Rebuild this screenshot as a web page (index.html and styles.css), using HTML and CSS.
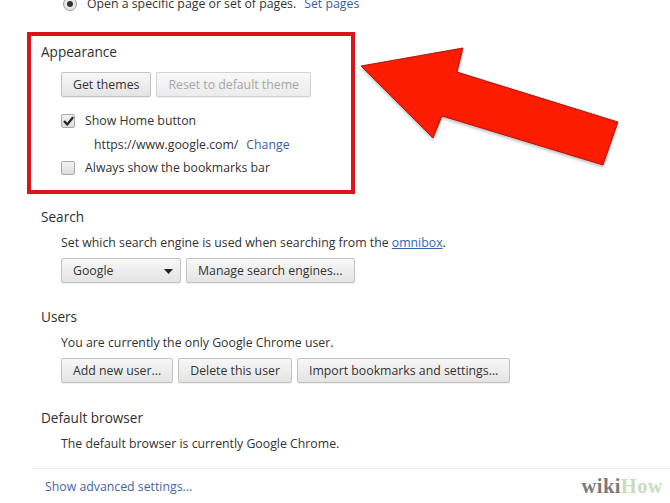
FILE: index.html
```
<!DOCTYPE html>
<html>
<head>
<meta charset="utf-8">
<link rel="stylesheet" href="styles.css">
</head>
<body>
<div class="page">
  <div class="row top-row">
    <span class="radio"><span class="radio-dot"></span></span>
    <span class="txt">Open a specific page or set of pages.</span>
    <a class="link">Set pages</a>
  </div>

  <div class="appearance">
    <div class="heading">Appearance</div>
    <div class="indent">
      <div class="btn-row">
        <span class="btn">Get themes</span>
        <span class="btn disabled">Reset to default theme</span>
      </div>
      <div class="row check-row">
        <span class="checkbox checked">
          <svg viewBox="0 0 13 13" width="13" height="13"><path d="M2.6 6.6 L5.2 9.6 L10.6 2.8" fill="none" stroke="#262626" stroke-width="2.3" stroke-linecap="round" stroke-linejoin="round"/></svg>
        </span>
        <span class="txt">Show Home button</span>
      </div>
      <div class="row url-row">
        <span class="txt">https://www.google.com/</span>
        <a class="link">Change</a>
      </div>
      <div class="row check-row2">
        <span class="checkbox"></span>
        <span class="txt">Always show the bookmarks bar</span>
      </div>
    </div>
  </div>

  <div class="section search">
    <div class="heading">Search</div>
    <div class="indent">
      <div class="desc">Set which search engine is used when searching from the <a class="link underline">omnibox</a>.</div>
      <div class="btn-row">
        <span class="btn select"><span>Google</span><svg class="caret" viewBox="0 0 9 5" width="9" height="5"><path d="M0 0 H9 L4.5 5 Z" fill="#222"/></svg></span>
        <span class="btn">Manage search engines...</span>
      </div>
    </div>
  </div>

  <div class="section users">
    <div class="heading">Users</div>
    <div class="indent">
      <div class="desc">You are currently the only Google Chrome user.</div>
      <div class="btn-row">
        <span class="btn">Add new user...</span>
        <span class="btn">Delete this user</span>
        <span class="btn">Import bookmarks and settings...</span>
      </div>
    </div>
  </div>

  <div class="section default">
    <div class="heading">Default browser</div>
    <div class="indent">
      <div class="desc">The default browser is currently Google Chrome.</div>
    </div>
  </div>

  <div class="footer">
    <a class="link adv">Show advanced settings...</a>
    <span class="logo"><span class="wiki">wiki</span><span class="how">How</span></span>
  </div>

  <svg class="arrow" viewBox="0 0 670 503" width="670" height="503">
    <defs>
      <filter id="sh" x="-10%" y="-10%" width="120%" height="130%">
        <feGaussianBlur in="SourceAlpha" stdDeviation="1.5"/>
        <feOffset dx="0" dy="2"/>
        <feComponentTransfer><feFuncA type="linear" slope="0.25"/></feComponentTransfer>
        <feMerge><feMergeNode/><feMergeNode in="SourceGraphic"/></feMerge>
      </filter>
    </defs>
    <polygon points="361,66 463,48 457,72 618,122 603,165 442,116 433,138" fill="#fc1a00" stroke="#a81a12" stroke-width="1" stroke-linejoin="miter" filter="url(#sh)"/>
  </svg>
</div>
</body>
</html>
```
FILE: styles.css
```
html, body {
  margin: 0;
  padding: 0;
  background: #ffffff;
}
body {
  font-family: "Open Sans", "Noto Sans", sans-serif;
  font-size: 12.3px;
  color: #333333;
  width: 670px;
  height: 503px;
  overflow: hidden;
}
.page {
  position: relative;
  width: 670px;
  height: 503px;
  display: flex;
  flex-direction: column;
}
.row {
  display: flex;
  align-items: center;
  height: 16px;
  line-height: 16px;
}
.txt { white-space: nowrap; }
.link {
  color: #3a5ca8;
  white-space: nowrap;
}
.underline {
  text-decoration: underline;
  color: #3366bb;
}
.top-row {
  margin-top: -4px;
  margin-left: 63px;
}
.radio {
  width: 12px;
  height: 12px;
  border-radius: 50%;
  border: 1px solid #a0a0a0;
  background: radial-gradient(circle, #f4f4f4 0%, #dcdcdc 100%);
  display: flex;
  align-items: center;
  justify-content: center;
  margin-right: 10px;
}
.radio-dot {
  width: 6px;
  height: 6px;
  border-radius: 50%;
  background: #333;
}
.top-row .link { margin-left: 8px; }

.appearance {
  margin-top: 20px;
  margin-left: 27px;
  width: 310px;
  height: 155px;
  border: 4px solid #dc1418;
  box-sizing: content-box;
  padding: 0 0 0 10px;
  display: flex;
  flex-direction: column;
}
.heading {
  font-size: 13.6px;
  height: 18px;
  line-height: 18px;
  color: #303030;
  white-space: nowrap;
}
.appearance .heading { margin-top: 7px; }
.indent {
  margin-left: 20px;
  display: flex;
  flex-direction: column;
}
.btn-row {
  display: flex;
  gap: 5px;
}
.appearance .btn-row { margin-top: 11px; }
.btn {
  height: 23px;
  line-height: 23px;
  padding: 0 11px;
  border: 1px solid #c2c2c2;
  border-radius: 2px;
  background: linear-gradient(#f7f7f7, #e4e4e4);
  color: #333;
  white-space: nowrap;
  box-shadow: 0 1px 0 rgba(0,0,0,0.06);
}
.btn.disabled {
  color: #a6a6a6;
  border-color: #d2d2d2;
  background: linear-gradient(#f8f8f8, #ececec);
}
.checkbox {
  width: 12px;
  height: 12px;
  border: 1px solid #a9a9a9;
  border-radius: 2px;
  background: linear-gradient(#f2f2f2, #dcdcdc);
  margin-right: 10px;
  position: relative;
  display: flex;
}
.checkbox svg { position: absolute; left: -0.5px; top: -0.5px; }
.check-row { margin-top: 16px; }
.url-row { margin-top: 8px; margin-left: 33px; }
.url-row .link { margin-left: 8px; }
.check-row2 { margin-top: 7px; }

.section { display: flex; flex-direction: column; margin-left: 41px; }
.search { margin-top: 14px; }
.desc {
  height: 16px;
  line-height: 16px;
  white-space: nowrap;
}
.section .desc { margin-top: 9px; }
.section .btn-row { margin-top: 7px; }
.select {
  width: 100px;
  padding-right: 7px;
  display: flex;
  align-items: center;
  justify-content: space-between;
}
.caret { margin-top: 1px; }
.users { margin-top: 25px; }
.default { margin-top: 26px; }

.footer {
  margin-top: 16px;
  margin-left: 32px;
  border-top: 1px solid #e9e9e9;
  height: 34px;
  display: flex;
  align-items: center;
  justify-content: space-between;
  padding-left: 13px;
  padding-right: 7px;
}
.adv { color: #4566aa; }
.logo {
  font-family: "Liberation Serif", "DejaVu Serif", serif;
  font-weight: bold;
  font-size: 20.5px;
  letter-spacing: 0.4px;
}
.wiki { color: #7b7b7b; }
.how { color: #c9dcbc; }

.arrow {
  position: absolute;
  left: 0;
  top: 0;
  pointer-events: none;
}
```
